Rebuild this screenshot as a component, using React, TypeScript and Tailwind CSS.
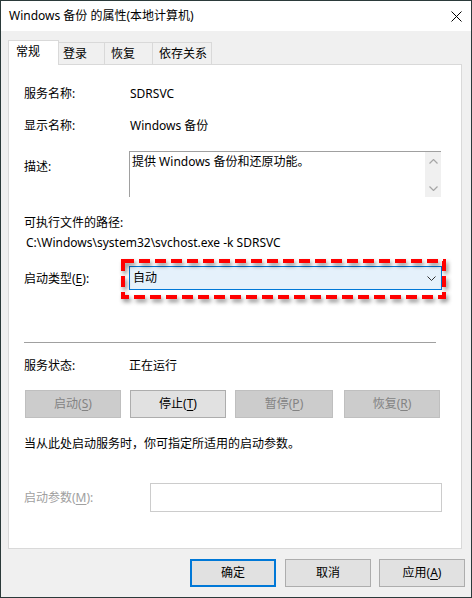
import React from "react";

const U = ({ c }: { c: string }) => <span className="underline underline-offset-2">{c}</span>;

function Btn({
  children,
  w,
  disabled,
  primary,
}: {
  children: React.ReactNode;
  w: string;
  disabled?: boolean;
  primary?: boolean;
}) {
  const base = "h-[28px] flex items-center justify-center shrink-0";
  const cls = disabled
    ? "bg-[#cccccc] border border-[#bfbfbf] text-[#838383]"
    : primary
    ? "bg-[#e1e1e1] border-2 border-[#0078d7] text-black"
    : "bg-[#e1e1e1] border border-[#adadad] text-black";
  return <div className={`${base} ${cls} ${w}`}>{children}</div>;
}

export default function App() {
  return (
    <div className="w-[472px] h-[598px] bg-[#f0f0f0] border border-[#2b3a3a] flex flex-col font-['Noto_Sans','Noto_Sans_CJK_SC',sans-serif] text-[12px] leading-[20px] text-black overflow-hidden">
      {/* Title bar */}
      <div className="h-[30px] bg-white flex items-center justify-between pl-[8px] pr-[9px] shrink-0">
        <span className="text-[12px]">Windows 备份 的属性(本地计算机)</span>
        <svg width="11" height="11" viewBox="0 0 11 11">
          <path d="M0.5 0.5 L10.5 10.5 M10.5 0.5 L0.5 10.5" stroke="#000" strokeWidth="1" fill="none" />
        </svg>
      </div>

      {/* Tabs */}
      <div className="relative z-10 flex items-end h-[24px] mt-[9px] ml-[7px]">
        <div className="h-[25px] -mb-[1px] w-[51px] bg-white border border-b-0 border-[#d9d9d9] pl-[7px] pt-[1px]">
          常规
        </div>
        <div className="h-[22px] w-[46px] border border-l-0 border-b-0 border-[#d9d9d9] pl-[4px] flex items-center">
          登录
        </div>
        <div className="h-[22px] w-[48px] border border-l-0 border-b-0 border-[#d9d9d9] pl-[6px] flex items-center">
          恢复
        </div>
        <div className="h-[22px] w-[59px] border border-l-0 border-b-0 border-[#d9d9d9] pl-[6px] flex items-center">
          依存关系
        </div>
      </div>

      {/* Panel */}
      <div className="ml-[7px] w-[454px] h-[485px] bg-white border border-[#d9d9d9] pl-[15px] pt-[19px] flex flex-col shrink-0">
        <div className="flex h-[20px] items-center">
          <div className="w-[106px]">服务名称:</div>
          <div>SDRSVC</div>
        </div>
        <div className="flex h-[20px] items-center mt-[12px]">
          <div className="w-[106px]">显示名称:</div>
          <div>Windows 备份</div>
        </div>
        <div className="flex mt-[15px]">
          <div className="w-[105px] mt-[6px]">描述:</div>
          <div className="w-[312px] h-[46px] flex border-t border-l border-[#a0a0a0]">
            <div className="flex-1 pl-[2px] pt-0">提供 Windows 备份和还原功能。</div>
            <div className="w-[16px] bg-[#f0f0f0] flex flex-col items-center justify-between pt-[7px] pb-[6px]">
              <svg width="9" height="5" viewBox="0 0 9 5">
                <path d="M0.5 4.5 L4.5 0.5 L8.5 4.5" stroke="#a6a6a6" strokeWidth="1.2" fill="none" />
              </svg>
              <svg width="9" height="5" viewBox="0 0 9 5">
                <path d="M0.5 0.5 L4.5 4.5 L8.5 0.5" stroke="#a6a6a6" strokeWidth="1.2" fill="none" />
              </svg>
            </div>
          </div>
        </div>
        <div className="h-[20px] flex items-center mt-[16px]">可执行文件的路径:</div>
        <div className="h-[20px] flex items-center ml-[2px]">C:\Windows\system32\svchost.exe -k SDRSVC</div>

        <div className="flex items-center mt-[13px]">
          <div className="w-[105px] pt-[2px]">
            启动类型(<U c="E" />):
          </div>
          <div className="relative w-[313px] h-[24px] bg-[#e5f1fb] border border-[#0078d7] flex items-center justify-between pl-[3px] pr-[5px]">
            <span>自动</span>
            <svg width="9" height="5" viewBox="0 0 9 5">
              <path d="M0.5 0.5 L4.5 4.5 L8.5 0.5" stroke="#333" strokeWidth="1" fill="none" />
            </svg>
            <svg
              className="absolute left-[-9px] top-[-8px] drop-shadow-[2px_3px_2px_rgba(0,0,0,0.45)] pointer-events-none"
              width="330"
              height="46"
              viewBox="0 0 330 46"
            >
              <rect
                x="2"
                y="2"
                width="321"
                height="36"
                fill="none"
                stroke="#ff0000"
                strokeWidth="4"
                strokeDasharray="11 5"
              />
            </svg>
          </div>
        </div>

        <div className="w-[412px] h-[1px] bg-[#a0a0a0] mt-[52px]" />

        <div className="flex h-[20px] items-center mt-[13px]">
          <div className="w-[105px]">服务状态:</div>
          <div>正在运行</div>
        </div>

        <div className="flex mt-[14px] ml-[1px]">
          <Btn w="w-[96px]" disabled>
            启动(<U c="S" />)
          </Btn>
          <div className="ml-[9px]">
            <Btn w="w-[96px]">
              停止(<U c="T" />)
            </Btn>
          </div>
          <div className="ml-[9px]">
            <Btn w="w-[98px]" disabled>
              暂停(<U c="P" />)
            </Btn>
          </div>
          <div className="ml-[11px]">
            <Btn w="w-[96px]" disabled>
              恢复(<U c="R" />)
            </Btn>
          </div>
        </div>

        <div className="h-[20px] flex items-center mt-[16px]">当从此处启动服务时，你可指定所适用的启动参数。</div>

        <div className="flex items-center mt-[29px]">
          <div className="w-[126px] text-[#a0a0a0]">
            启动参数(<U c="M" />):
          </div>
          <div className="w-[292px] h-[29px] bg-white border border-[#cccccc]" />
        </div>
      </div>

      {/* Bottom buttons */}
      <div className="flex justify-end mt-[10px] pr-[6px]">
        <Btn w="w-[86px]" primary>
          确定
        </Btn>
        <div className="ml-[9px]">
          <Btn w="w-[86px]">取消</Btn>
        </div>
        <div className="ml-[8px]">
          <Btn w="w-[86px]">
            应用(<U c="A" />)
          </Btn>
        </div>
      </div>
    </div>
  );
}
